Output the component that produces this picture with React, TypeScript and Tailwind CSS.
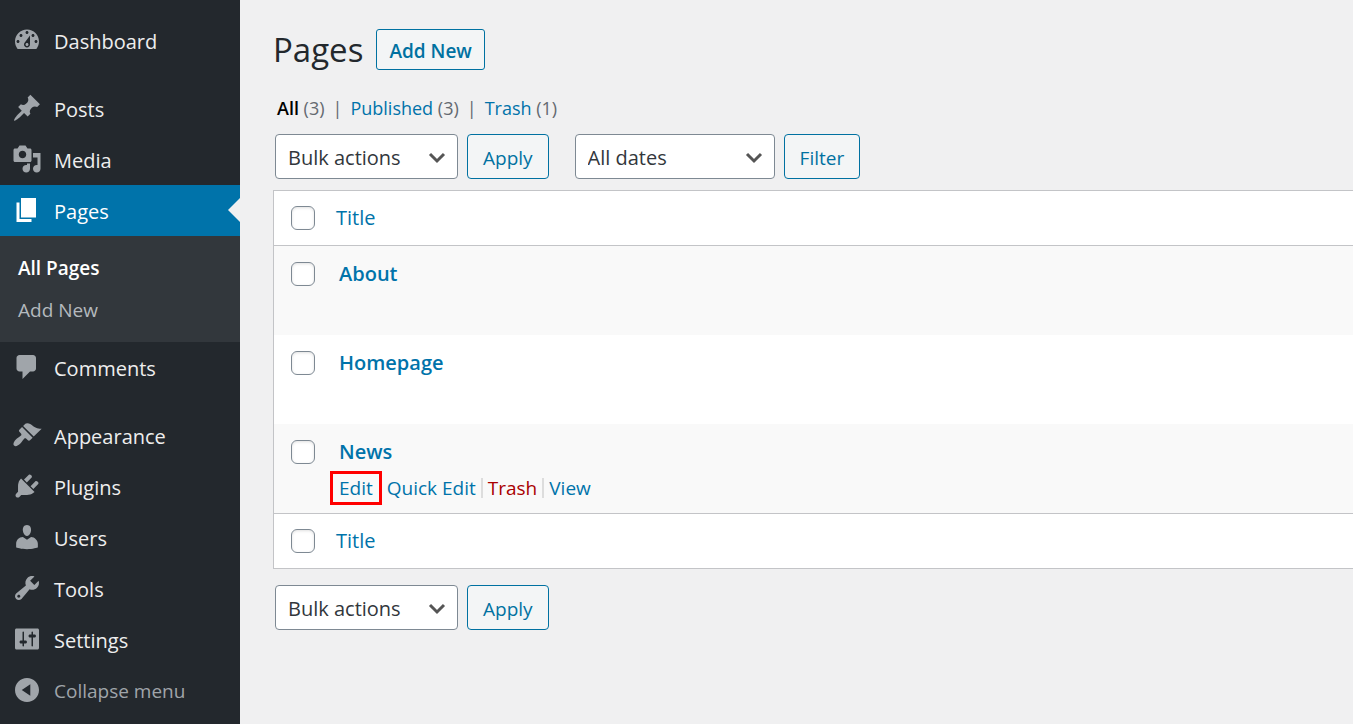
import type { ReactNode } from 'react';
import clsx from 'clsx';

const icons = {
  dashboard: "M3.76 16h12.48c1.1-1.37 1.76-3.11 1.76-5 0-4.42-3.58-8-8-8s-8 3.58-8 8c0 1.89.66 3.63 1.76 5zM10 4c.55 0 1 .45 1 1s-.45 1-1 1-1-.45-1-1 .45-1 1-1zM6 6c.55 0 1 .45 1 1s-.45 1-1 1-1-.45-1-1 .45-1 1-1zm8 0c.55 0 1 .45 1 1s-.45 1-1 1-1-.45-1-1 .45-1 1-1zm-5.37 5.55L12 7v6c0 1.1-.9 2-2 2s-2-.9-2-2c0-.57.24-1.08.63-1.45zM4 10c.55 0 1 .45 1 1s-.45 1-1 1-1-.45-1-1 .45-1 1-1zm12 0c.55 0 1 .45 1 1s-.45 1-1 1-1-.45-1-1 .45-1 1-1zm-5 3c0-.55-.45-1-1-1s-1 .45-1 1 .45 1 1 1 1-.45 1-1z",
  post: "M10.44 3.02l1.82-1.82 6.36 6.35-1.83 1.82c-1.05-.68-2.48-.57-3.41.36l-.75.75c-.92.93-1.04 2.35-.35 3.41l-1.83 1.82-2.41-2.41-2.8 2.79c-.42.42-3.38 2.71-3.8 2.29s1.86-3.39 2.28-3.81l2.79-2.79L4.1 9.36l1.83-1.82c1.05.69 2.48.57 3.4-.36l.75-.75c.93-.92 1.05-2.35.36-3.41z",
  media: "M13 11V4c0-.55-.45-1-1-1h-1.67L9 1H5L3.67 3H2c-.55 0-1 .45-1 1v7c0 .55.45 1 1 1h10c.55 0 1-.45 1-1zM7 4.5c1.38 0 2.5 1.12 2.5 2.5S8.38 9.5 7 9.5 4.5 8.38 4.5 7 5.62 4.5 7 4.5zM14 6h5v10.5c0 1.38-1.12 2.5-2.5 2.5S14 17.88 14 16.5s1.12-2.5 2.5-2.5c.17 0 .34.02.5.05V9h-3V6zm-4 8.05V13h2v3.5c0 1.38-1.12 2.5-2.5 2.5S7 17.88 7 16.5 8.12 14 9.5 14c.17 0 .34.02.5.05z",
  page: "M6 15V2h10v13H6zm-1 1h8v2H3V5h2v11z",
  comments: "M5 2h9c1.1 0 2 .9 2 2v7c0 1.1-.9 2-2 2h-2l-5 5v-5H5c-1.1 0-2-.9-2-2V4c0-1.1.9-2 2-2z",
  appearance: "M14.48 11.06L7.41 3.99l1.5-1.5c.5-.56 2.3-.47 3.51.32 1.21.8 1.43 1.28 2.91 2.1 1.18.64 2.45 1.26 4.45.85zm-.71.71L6.7 4.7 4.93 6.47c-.39.39-.39 1.02 0 1.41l1.06 1.06c.39.39.39 1.03 0 1.42-.6.6-1.43 1.11-2.21 1.69-.35.26-.7.53-1.01.84C1.43 14.23.4 16.08 1.4 17.07c.99 1 2.84-.03 4.18-1.36.31-.31.58-.66.85-1.02.57-.78 1.08-1.61 1.69-2.21.39-.39 1.02-.39 1.41 0l1.06 1.06c.39.39 1.02.39 1.41 0z",
  plugins: "M13.11 4.36L9.87 7.6 8 5.73l3.24-3.24c.35-.34 1.05-.2 1.56.32.52.51.66 1.21.31 1.55zm-8 1.77l.91-1.12 9.01 9.01-1.19.84c-.71.71-2.63 1.16-3.82 1.16H6.14L4.9 17.26c-.59.59-1.54.59-2.12 0-.59-.58-.59-1.53 0-2.12l1.24-1.24v-3.88c0-1.13.4-3.19 1.09-3.89zm7.26 3.97l3.24-3.24c.34-.35 1.04-.21 1.55.31.52.51.66 1.21.31 1.55l-3.24 3.25z",
  users: "M10 9.25c-2.27 0-2.73-3.44-2.73-3.44C7 4.02 7.82 2 9.97 2c2.16 0 2.98 2.02 2.71 3.81 0 0-.41 3.44-2.68 3.44zm0 2.57L12.72 10c2.39 0 4.52 2.33 4.52 4.53v2.49s-3.65 1.13-7.24 1.13c-3.65 0-7.24-1.13-7.24-1.13v-2.49c0-2.25 1.94-4.48 4.47-4.48z",
  tools: "M16.68 9.77c-1.34 1.34-3.3 1.67-4.95.99l-5.41 6.52c-.99.99-2.59.99-3.58 0s-.99-2.59 0-3.57l6.52-5.42c-.68-1.65-.35-3.61.99-4.95 1.28-1.28 3.12-1.62 4.72-1.06l-2.89 2.89 2.82 2.82 2.86-2.87c.53 1.58.18 3.39-1.08 4.65zM3.81 16.21c.4.39 1.04.39 1.43 0 .4-.4.4-1.04 0-1.43-.39-.4-1.03-.4-1.43 0-.39.39-.39 1.03 0 1.43z",
  settings: "M18 16V4c0-.55-.45-1-1-1H3c-.55 0-1 .45-1 1v12c0 .55.45 1 1 1h14c.55 0 1-.45 1-1zM8 11h1c.55 0 1 .45 1 1s-.45 1-1 1H8v1.5c0 .28-.22.5-.5.5s-.5-.22-.5-.5V13H6c-.55 0-1-.45-1-1s.45-1 1-1h1V5.5c0-.28.22-.5.5-.5s.5.22.5.5V11zm5-2h-1c-.55 0-1-.45-1-1s.45-1 1-1h1V5.5c0-.28.22-.5.5-.5s.5.22.5.5V7h1c.55 0 1 .45 1 1s-.45 1-1 1h-1v5.5c0 .28-.22.5-.5.5s-.5-.22-.5-.5V9z",
  collapse: "M10 2c4.42 0 8 3.58 8 8s-3.58 8-8 8-8-3.58-8-8 3.58-8 8-8zM12.2 6.2L6.5 10l5.7 3.8z",
};

type IconName = keyof typeof icons;

const MenuIcon = ({ name }: { name: IconName }) => (
  <svg viewBox="0 0 20 20" className="mb-1 size-[30px] shrink-0" fill="currentColor" fillRule="evenodd" aria-hidden="true">
    <path d={icons[name]} />
  </svg>
);

const MenuItem = ({ title, icon, active = false }: { title: string; icon: IconName; active?: boolean }) => (
  <a
    href="#"
    className={clsx(
      "relative flex h-[51px] items-center gap-3 pt-0.5 pl-3",
      active ? "bg-[#0073aa] text-white" : "text-[#a0a5aa]"
    )}
  >
    <MenuIcon name={icon} />
    <span className={active ? "text-white" : "text-[#eeeeee]"}>{title}</span>
    {active && (
      <svg viewBox="0 0 12 24" className="absolute top-[13px] right-0 h-6 w-3" aria-hidden="true">
        <path d="M12 0v24L0 12z" fill="#f0f0f1" />
      </svg>
    )}
  </a>
);

const Sidebar = () => {
  const contentItems: { title: string; icon: IconName }[] = [
    { title: "Posts", icon: "post" },
    { title: "Media", icon: "media" },
  ];

  const adminItems: { title: string; icon: IconName }[] = [
    { title: "Appearance", icon: "appearance" },
    { title: "Plugins", icon: "plugins" },
    { title: "Users", icon: "users" },
    { title: "Tools", icon: "tools" },
    { title: "Settings", icon: "settings" },
  ];

  return (
    <nav className="w-60 shrink-0 bg-[#23282d] pt-[15px] text-xl">
      <MenuItem title="Dashboard" icon="dashboard" />
      <div className="mt-[17px]">
        {contentItems.map((item) => <MenuItem key={item.title} {...item} />)}
        <MenuItem title="Pages" icon="page" active />
        <div className="bg-[#32373c] px-[18px] py-[11px] text-[19px]">
          <a href="#" className="block leading-[42px] font-semibold text-white">All Pages</a>
          <a href="#" className="block leading-[42px] text-[#b4b9be]">Add New</a>
        </div>
        <MenuItem title="Comments" icon="comments" />
      </div>
      <div className="mt-[17px]">
        {adminItems.map((item) => <MenuItem key={item.title} {...item} />)}
      </div>
      <button className="flex h-[51px] w-full items-center gap-3 pt-0.5 pl-3 text-[19px] text-[#a0a5aa]">
        <MenuIcon name="collapse" />
        <span>Collapse menu</span>
      </button>
    </nav>
  );
};

const ActionButton = ({ children }: { children: ReactNode }) => (
  <button className="h-[45px] rounded border border-[#0071a1] bg-[#f3f5f6] px-[15px] pt-[3px] text-[19px] text-[#0071a1]">
    {children}
  </button>
);

const Select = ({ label, option, className }: { label: string; option: string; className: string }) => (
  <div className={clsx("relative", className)}>
    <select
      aria-label={label}
      className="h-[45px] w-full appearance-none rounded border border-[#7e8993] bg-white pt-[3px] pl-3 text-xl text-[#32373c]"
    >
      <option>{option}</option>
    </select>
    <svg viewBox="0 0 18 12" className="pointer-events-none absolute top-[18px] right-3 h-3 w-[18px]" aria-hidden="true">
      <path d="M2 2l7 7 7-7" fill="none" stroke="#555" strokeWidth="3" />
    </svg>
  </div>
);

const BulkActions = () => (
  <div className="flex gap-[9px]">
    <Select label="Select bulk action" option="Bulk actions" className="w-[183px]" />
    <ActionButton>Apply</ActionButton>
  </div>
);

const Checkbox = ({ label }: { label: string }) => (
  <input
    type="checkbox"
    aria-label={label}
    className="block size-6 appearance-none rounded-md border border-[#7e8993] bg-white shadow-[inset_0_1px_3px_rgba(0,0,0,0.12)]"
  />
);

const StatusLinks = () => (
  <ul className="flex gap-2 px-1 text-lg leading-7 text-[#646970]">
    <li><a href="#" className="font-semibold text-black">All</a> (3)</li>
    <li>|</li>
    <li><a href="#" className="text-[#0073aa]">Published</a> (3)</li>
    <li>|</li>
    <li><a href="#" className="text-[#0073aa]">Trash</a> (1)</li>
  </ul>
);

const RowActions = () => (
  <div className="mt-[3px] -ml-[9px] flex items-center text-[19px] leading-7 text-[#0073aa]">
    <a href="#" className="border-3 border-[#ff0000] px-1.5">Edit</a>
    <a href="#" className="px-[5px]">Quick Edit</a>
    <a href="#" className="border-l-2 border-[#dddddd] px-[5px] leading-5 text-[#a00]">Trash</a>
    <a href="#" className="border-l-2 border-[#dddddd] px-[5px] leading-5">View</a>
  </div>
);

const HeadingCells = () => (
  <>
    <td className="w-[62px] pl-[17px]"><Checkbox label="Select all" /></td>
    <th scope="col" className="text-left font-normal">
      <a href="#" className="text-[#0073aa]">Title</a>
    </th>
  </>
);

const PagesTable = () => {
  const pages = [
    { title: "About" },
    { title: "Homepage" },
    { title: "News", actions: true },
  ];

  return (
    <table className="w-full border-separate border-spacing-0 border border-r-0 border-[#c3c4c7] bg-white text-xl">
      <thead>
        <tr className="h-[55px] *:border-b *:border-[#c3c4c7]"><HeadingCells /></tr>
      </thead>
      <tbody>
        {pages.map((page) => (
          <tr key={page.title} className="h-[89px] align-top odd:bg-[#f9f9f9]">
            <td className="pt-4 pl-[17px]"><Checkbox label={`Select ${page.title}`} /></td>
            <td className="pt-3 pl-[3px]">
              <a href="#" className="block leading-8 font-semibold text-[#0073aa]">{page.title}</a>
              {page.actions && <RowActions />}
            </td>
          </tr>
        ))}
      </tbody>
      <tfoot>
        <tr className="h-[55px] *:border-t *:border-[#c3c4c7]"><HeadingCells /></tr>
      </tfoot>
    </table>
  );
};

const App = () => {
  return (
    <div className="flex min-h-screen bg-[#f0f0f1] font-['Open_Sans','Noto_Sans',sans-serif]">
      <Sidebar />
      <main className="min-w-0 flex-1 pt-[29px] pl-[33px]">
        <header className="flex items-center gap-[13px]">
          <h1 className="text-[33px] leading-[41px] text-[#23282d]">Pages</h1>
          <button className="h-[41px] rounded-[3px] border border-[#0071a1] bg-[#f3f5f6] px-3 pt-[3px] text-[19px] font-semibold text-[#0071a1]">
            Add New
          </button>
        </header>
        <div className="mt-6 mb-3">
          <StatusLinks />
        </div>
        <div className="mb-[11px] flex gap-[26px] pl-0.5">
          <BulkActions />
          <div className="flex gap-[9px]">
            <Select label="Filter by date" option="All dates" className="w-[200px]" />
            <ActionButton>Filter</ActionButton>
          </div>
        </div>
        <PagesTable />
        <div className="mt-4 pl-0.5">
          <BulkActions />
        </div>
      </main>
    </div>
  );
};

export default App;
